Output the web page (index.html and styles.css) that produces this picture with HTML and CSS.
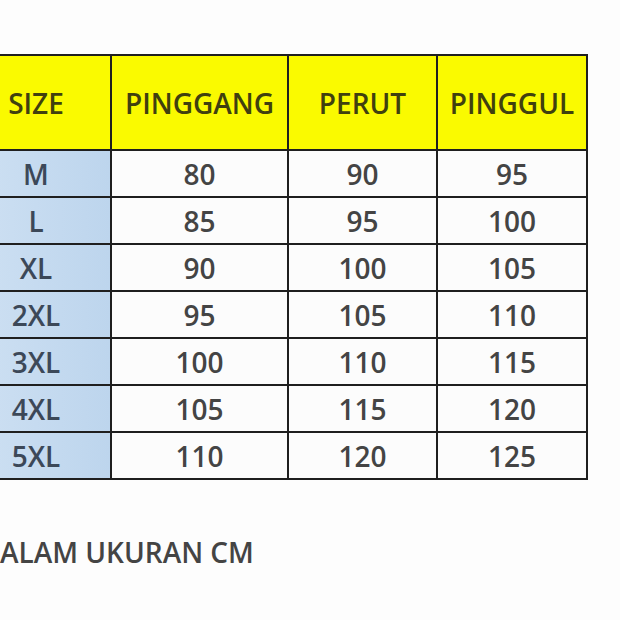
FILE: index.html
```html
<!DOCTYPE html>
<html>
<head>
<meta charset="utf-8">
<link rel="stylesheet" href="styles.css">
</head>
<body>
<div class="page">
  <table class="chart">
    <thead>
      <tr><th class="size">SIZE</th><th>PINGGANG</th><th>PERUT</th><th>PINGGUL</th></tr>
    </thead>
    <tbody>
      <tr><td class="size">M</td><td>80</td><td>90</td><td>95</td></tr>
      <tr><td class="size">L</td><td>85</td><td>95</td><td>100</td></tr>
      <tr><td class="size">XL</td><td>90</td><td>100</td><td>105</td></tr>
      <tr><td class="size">2XL</td><td>95</td><td>105</td><td>110</td></tr>
      <tr><td class="size">3XL</td><td>100</td><td>110</td><td>115</td></tr>
      <tr><td class="size">4XL</td><td>105</td><td>115</td><td>120</td></tr>
      <tr><td class="size">5XL</td><td>110</td><td>120</td><td>125</td></tr>
    </tbody>
  </table>
  <p class="note">ALAM UKURAN CM</p>
</div>
</body>
</html>
```
FILE: styles.css
```css
html, body {
  margin: 0;
  padding: 0;
  background: #fdfdfd;
}
.page {
  width: 620px;
  height: 620px;
  overflow: hidden;
  padding-top: 54px;
  box-sizing: border-box;
  font-family: "Open Sans", "Liberation Sans", sans-serif;
  color: #333;
}
.chart {
  border-collapse: collapse;
  margin-left: -40px;
  table-layout: fixed;
  width: 627px;
}
.chart th, .chart td {
  border: 2px solid #1f1f1f;
  text-align: center;
  vertical-align: middle;
  font-weight: 600;
  font-size: 28px;
  line-height: 32px;
  padding: 0;
  letter-spacing: 0;
}
.chart th {
  background: #fafa00;
  height: 93px;
  color: #40400f;
}
.chart td {
  background: #fcfcfc;
  height: 45px;
  color: #444;
}
.chart th:nth-child(1) { width: 148px; }
.chart th:nth-child(2) { width: 175px; }
.chart th:nth-child(3) { width: 147px; }
.chart th:nth-child(4) { width: 148px; }
.chart td.size {
  background: linear-gradient(to right, #cfe1f3, #bdd5ed);
  color: #3c4858;
}
.note {
  margin: 58px 0 0 0;
  font-size: 28px;
  font-weight: 600;
  letter-spacing: 0;
  color: #444;
  line-height: 1;
}
```
